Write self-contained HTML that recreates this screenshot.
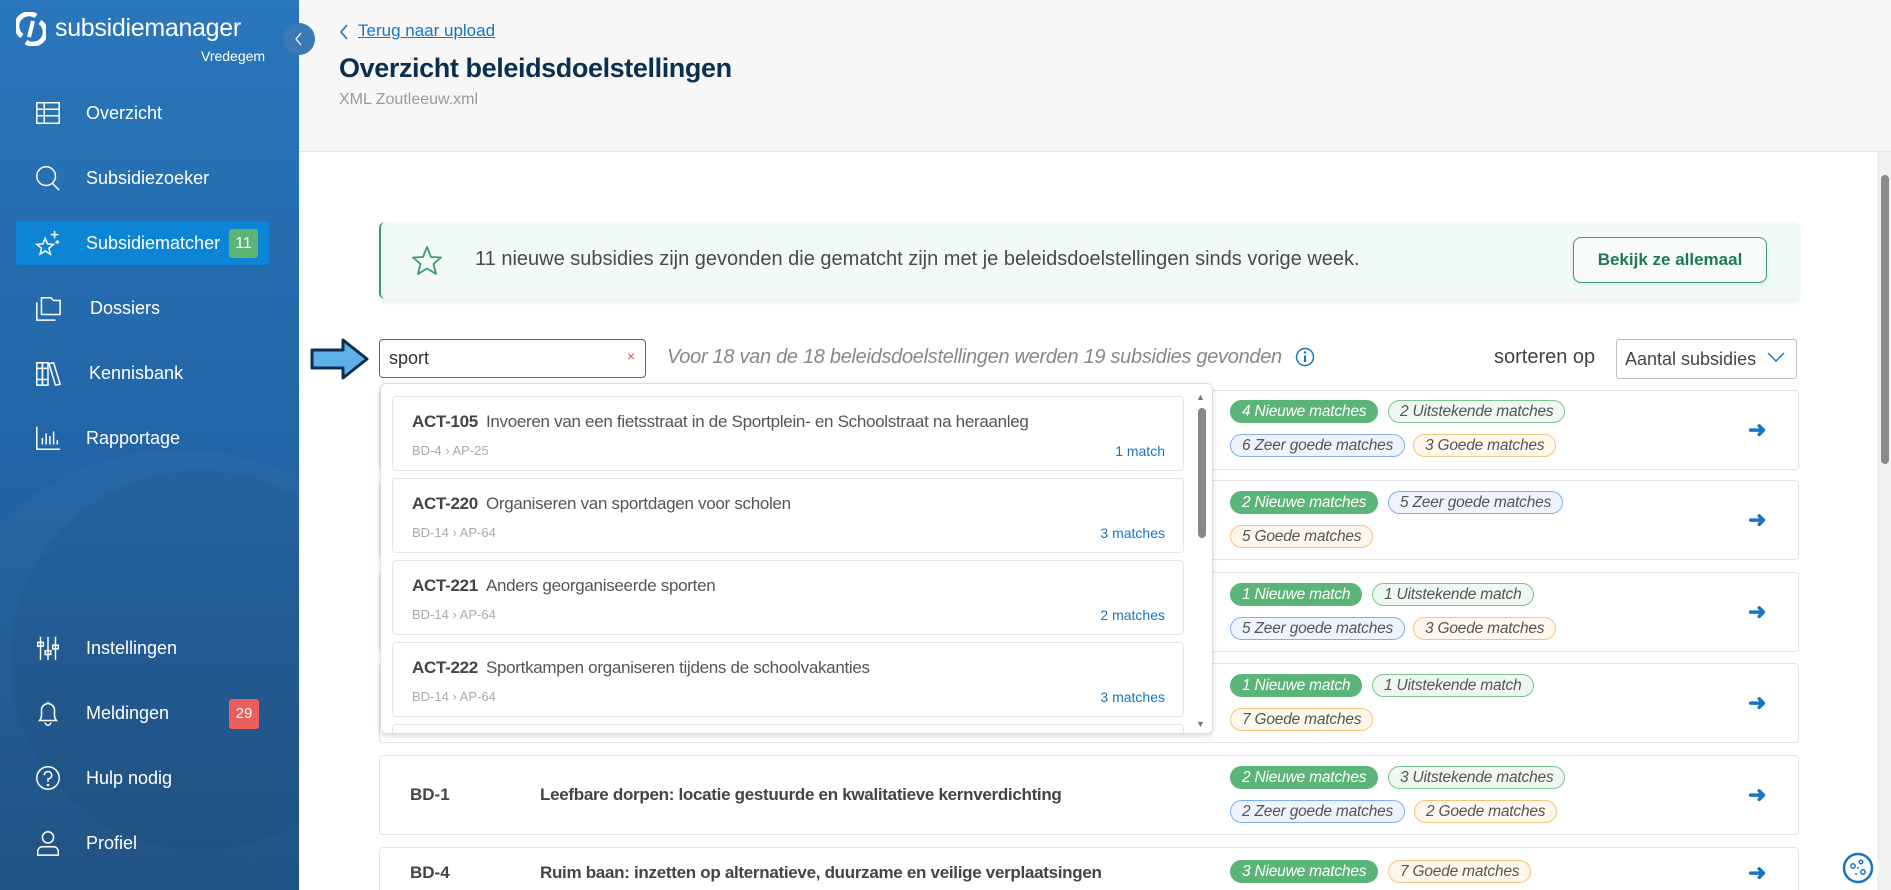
<!DOCTYPE html>
<html><head><meta charset="utf-8"><style>
*{box-sizing:border-box;margin:0;padding:0}
html,body{width:1891px;height:890px;overflow:hidden}
body{font-family:"Liberation Sans",sans-serif;background:#fff;position:relative;color:#333}
#wrap{position:absolute;left:0;top:0;width:1891px;height:890px;overflow:hidden}
.abs{position:absolute}
#side{left:0;top:0;width:299px;height:890px;background:linear-gradient(180deg,#2a77bb 0%,#2265a6 50%,#1c4f80 100%);overflow:hidden}
.nav{position:absolute;left:34px;color:#fff;font-size:18px;display:flex;align-items:center}
.nav svg{width:28px;height:28px;margin-right:24px;fill:none;stroke:#fff;stroke-width:1.6}
#hdr{left:299px;top:0;width:1592px;height:152px;background:#f7f7f7;border-bottom:1px solid #e6e6e6}
.row{position:absolute;left:379px;width:1420px;height:80px;border:1px solid #e3e3e3;border-radius:4px;background:#fff}
.b{position:absolute;height:23px;border-radius:12px;font-size:15.5px;font-style:italic;padding:0 11px;line-height:21px;border:1px solid;white-space:nowrap;letter-spacing:-.2px}
.g{background:#5bb478;border-color:#5bb478;color:#fff}
.u{background:#eef8f1;border-color:#7cc494;color:#555}
.z{background:#eef4ff;border-color:#83aef0;color:#555}
.o{background:#fff7ec;border-color:#f5c47c;color:#555}
.arr{position:absolute;left:1368px;top:26px;color:#1676c4;font-size:22px;font-weight:bold}
.item{position:absolute;left:11px;width:792px;height:75px;border:1px solid #e6e6e6;border-radius:4px;background:#fff}
.item .t{position:absolute;left:19px;top:15px;font-size:17px;color:#555;white-space:nowrap;letter-spacing:-.3px}
.item .t b{color:#444;margin-right:8px}
.item .s{position:absolute;left:19px;top:46px;font-size:13px;color:#aaa}
.item .m{position:absolute;right:18px;top:46px;font-size:14px;color:#1676c4}
</style></head><body><div id="wrap">
<div id="side" class="abs">
 <svg class="abs" style="left:-100px;top:430px" width="460" height="460" viewBox="0 0 460 460"><circle cx="280" cy="280" r="260" fill="rgba(255,255,255,0.025)"/><circle cx="300" cy="230" r="190" fill="rgba(0,0,0,0.03)"/></svg>
 <svg class="abs" style="left:16px;top:12px" width="30" height="34" viewBox="0 0 30 34"><path d="M20 4 A12 12 0 0 0 6 24 M10 30 A12 12 0 0 0 24 10" fill="none" stroke="#fff" stroke-width="5"/><path d="M17 9 L13 25" stroke="#fff" stroke-width="4"/></svg>
 <div class="abs" style="left:55px;top:14px;color:#fff;font-size:25px;letter-spacing:-.3px">subsidiemanager</div>
 <div class="abs" style="left:201px;top:48px;color:#fff;font-size:14px">Vredegem</div>
 <div class="nav" style="top:99px"><svg viewBox="0 0 30 30"><rect x="3" y="4" width="24" height="22"/><path d="M3 11H27M3 18H27M11 4V26"/></svg>Overzicht</div>
 <div class="nav" style="top:164px"><svg viewBox="0 0 30 30"><circle cx="13" cy="13" r="10"/><path d="M20 21L27 28"/></svg>Subsidiezoeker</div>
 <div class="abs" style="left:16px;top:221px;width:253px;height:44px;background:#0c85d6;border-radius:4px"></div>
 <div class="nav" style="top:229px"><svg viewBox="0 0 30 30"><path d="M12 10L14.5 16 21 16.5 16 20.5 17.5 27 12 23.5 6.5 27 8 20.5 3 16.5 9.5 16Z"/><path d="M22 2V10M18 6H26M25 12V16M23 14H27"/></svg>Subsidiematcher</div>
 <div class="abs" style="left:229px;top:229px;width:29px;height:29px;background:#5cb574;border-radius:3px;color:#fff;font-size:16px;text-align:center;line-height:29px">11</div>
 <div class="nav" style="top:294px"><svg viewBox="0 0 30 30"><path d="M8 4H18L21 7H28V22H8Z"/><path d="M3 9V28H23"/></svg><span style="margin-left:4px">Dossiers</span></div>
 <div class="nav" style="top:359px"><svg viewBox="0 0 30 30"><rect x="3" y="4" width="6" height="24"/><rect x="9" y="4" width="6" height="24"/><path d="M16 5L21 4 28 27 23 28Z"/><path d="M3 10H15M3 22H15"/></svg><span style="margin-left:3px">Kennisbank</span></div>
 <div class="nav" style="top:424px"><svg viewBox="0 0 30 30"><path d="M3 3V27H28M9 22V15M13 22V10M17 22V13M21 22V8M25 22V17"/></svg>Rapportage</div>
 <div class="nav" style="top:634px"><svg viewBox="0 0 30 30"><path d="M7 3V28M15 3V28M23 3V28"/><rect x="4" y="9" width="6" height="4"/><rect x="12" y="18" width="6" height="4"/><rect x="20" y="12" width="6" height="4"/></svg>Instellingen</div>
 <div class="nav" style="top:699px"><svg viewBox="0 0 30 30"><path d="M6 23C9 20 8 15 8 12A7 7 0 0 1 22 12C22 15 21 20 24 23Z M12 25A3 3 0 0 0 18 25M15 3V5"/></svg>Meldingen</div>
 <div class="abs" style="left:229px;top:699px;width:30px;height:30px;background:#ea5e5e;border-radius:3px;color:#fff;font-size:15px;text-align:center;line-height:30px">29</div>
 <div class="nav" style="top:764px"><svg viewBox="0 0 30 30"><circle cx="15" cy="15" r="12"/><path d="M11 12A4 4 0 1 1 15 16V19"/><circle cx="15" cy="22.5" r=".6"/></svg>Hulp nodig</div>
 <div class="nav" style="top:829px"><svg viewBox="0 0 30 30"><circle cx="15" cy="9" r="6"/><path d="M4 28V24A5 5 0 0 1 9 19H21A5 5 0 0 1 26 24V28Z"/></svg>Profiel</div>
</div>
<div id="hdr" class="abs"></div>
<div class="abs" style="left:283px;top:23px;width:32px;height:32px;border-radius:50%;background:#3a78b8"><svg width="32" height="32" viewBox="0 0 32 32"><path d="M18 10L13 16 18 22" fill="none" stroke="#fff" stroke-width="1.2"/></svg></div>
<svg class="abs" style="left:338px;top:22px" width="12" height="20" viewBox="0 0 12 20"><path d="M9 3L3 10 9 17" fill="none" stroke="#1676c4" stroke-width="1.6"/></svg>
<div class="abs" style="left:358px;top:21px;font-size:17px;color:#1676c4;text-decoration:underline">Terug naar upload</div>
<div class="abs" style="left:339px;top:53px;font-size:27px;font-weight:bold;color:#0d2f4f;letter-spacing:-.4px">Overzicht beleidsdoelstellingen</div>
<div class="abs" style="left:339px;top:91px;font-size:16px;color:#9a9a9a">XML Zoutleeuw.xml</div>
<div class="abs" style="left:1877px;top:152px;width:14px;height:738px;background:#f1f1f1"></div>
<div class="abs" style="left:1881px;top:175px;width:8px;height:289px;background:#8a8a8a;border-radius:4px"></div>
<div class="abs" style="left:379px;top:222px;width:1420px;height:77px;background:#f1faf6;border-left:2px solid #3f9a6b;border-radius:6px;box-shadow:0 3px 6px rgba(0,0,0,.08)"></div>
<svg class="abs" style="left:410px;top:244px" width="34" height="34" viewBox="0 0 34 34"><path d="M17 3L21 13 31 13.5 23.5 20 26 30 17 24.5 8 30 10.5 20 3 13.5 13 13Z" fill="none" stroke="#3f9a6b" stroke-width="1.8" stroke-linejoin="round"/></svg>
<div class="abs" style="left:475px;top:248px;font-size:20px;color:#4a4a4a">11 nieuwe subsidies zijn gevonden die gematcht zijn met je beleidsdoelstellingen sinds vorige week.</div>
<div class="abs" style="left:1573px;top:237px;width:194px;height:46px;border:1px solid #3f9a6b;border-radius:8px;background:#f7fcfa;color:#1f7a53;font-weight:bold;font-size:17px;text-align:center;line-height:44px;box-shadow:0 2px 4px rgba(0,0,0,.08)">Bekijk ze allemaal</div>
<svg class="abs" style="left:309px;top:337px" width="62" height="44" viewBox="0 0 62 44"><path d="M3 13H34V3L58 22 34 41V31H3Z" fill="#5fb0e8" stroke="#0d2f4f" stroke-width="3" stroke-linejoin="round"/></svg>
<div class="abs" style="left:379px;top:339px;width:267px;height:39px;border:1px solid #1676c4;border-radius:4px;background:#fff"></div>
<div class="abs" style="left:389px;top:348px;font-size:18px;color:#333">sport</div>
<div class="abs" style="left:627px;top:348px;font-size:14px;color:#e05555">×</div>
<div class="abs" style="left:667px;top:346px;font-size:20px;font-style:italic;color:#888;letter-spacing:-.3px">Voor 18 van de 18 beleidsdoelstellingen werden 19 subsidies gevonden</div>
<svg class="abs" style="left:1295px;top:347px" width="20" height="20" viewBox="0 0 20 20"><circle cx="10" cy="10" r="8.5" fill="none" stroke="#1676c4" stroke-width="1.5"/><path d="M10 8.5V15" stroke="#1676c4" stroke-width="2"/><circle cx="10" cy="5.5" r="1.2" fill="#1676c4"/></svg>
<div class="abs" style="left:1494px;top:346px;font-size:20px;color:#444">sorteren op</div>
<div class="abs" style="left:1616px;top:339px;width:181px;height:40px;border:1px solid #bbb;border-radius:3px;background:#fff"></div>
<div class="abs" style="left:1625px;top:349px;font-size:18px;color:#444">Aantal subsidies</div>
<svg class="abs" style="left:1766px;top:350px" width="20" height="14" viewBox="0 0 20 14"><path d="M2 3L10 11 18 3" fill="none" stroke="#1676c4" stroke-width="1.4"/></svg>
<div class="row" style="top:390px"><div class="b g" style="left:850px;top:9px">4 Nieuwe matches</div><div class="b u" style="left:1008px;top:9px">2 Uitstekende matches</div><div class="b z" style="left:850px;top:43px">6 Zeer goede matches</div><div class="b o" style="left:1033px;top:43px">3 Goede matches</div><div class="arr">➜</div></div>
<div class="row" style="top:480px"><div class="b g" style="left:850px;top:10px">2 Nieuwe matches</div><div class="b z" style="left:1008px;top:10px">5 Zeer goede matches</div><div class="b o" style="left:850px;top:44px">5 Goede matches</div><div class="arr">➜</div></div>
<div class="row" style="top:572px"><div class="b g" style="left:850px;top:10px">1 Nieuwe match</div><div class="b u" style="left:992px;top:10px">1 Uitstekende match</div><div class="b z" style="left:850px;top:44px">5 Zeer goede matches</div><div class="b o" style="left:1033px;top:44px">3 Goede matches</div><div class="arr">➜</div></div>
<div class="row" style="top:663px"><div class="b g" style="left:850px;top:10px">1 Nieuwe match</div><div class="b u" style="left:992px;top:10px">1 Uitstekende match</div><div class="b o" style="left:850px;top:44px">7 Goede matches</div><div class="arr">➜</div></div>
<div class="row" style="top:755px"><div class="abs" style="left:30px;top:29px;font-size:17px;font-weight:bold;color:#444">BD-1</div><div class="abs" style="left:160px;top:29px;font-size:17px;font-weight:bold;color:#444;letter-spacing:-.3px">Leefbare dorpen: locatie gestuurde en kwalitatieve kernverdichting</div><div class="b g" style="left:850px;top:10px">2 Nieuwe matches</div><div class="b u" style="left:1008px;top:10px">3 Uitstekende matches</div><div class="b z" style="left:850px;top:44px">2 Zeer goede matches</div><div class="b o" style="left:1034px;top:44px">2 Goede matches</div><div class="arr">➜</div></div>
<div class="row" style="top:847px;height:43px;border-bottom:none;border-radius:4px 4px 0 0"><div class="abs" style="left:30px;top:15px;font-size:17px;font-weight:bold;color:#444">BD-4</div><div class="abs" style="left:160px;top:15px;font-size:17px;font-weight:bold;color:#444;letter-spacing:-.3px">Ruim baan: inzetten op alternatieve, duurzame en veilige verplaatsingen</div><div class="b g" style="left:850px;top:12px">3 Nieuwe matches</div><div class="b o" style="left:1008px;top:12px">7 Goede matches</div><div class="arr" style="top:12px">➜</div></div>
<div class="abs" style="left:380px;top:383px;width:833px;height:351px;background:#fff;border:1px solid #ddd;border-radius:6px;box-shadow:0 2px 6px rgba(0,0,0,.15);overflow:hidden">
 <div class="item" style="top:12px"><div class="t"><b>ACT-105</b>Invoeren van een fietsstraat in de Sportplein- en Schoolstraat na heraanleg</div><div class="s">BD-4 › AP-25</div><div class="m">1 match</div></div>
 <div class="item" style="top:94px"><div class="t"><b>ACT-220</b>Organiseren van sportdagen voor scholen</div><div class="s">BD-14 › AP-64</div><div class="m">3 matches</div></div>
 <div class="item" style="top:176px"><div class="t"><b>ACT-221</b>Anders georganiseerde sporten</div><div class="s">BD-14 › AP-64</div><div class="m">2 matches</div></div>
 <div class="item" style="top:258px"><div class="t"><b>ACT-222</b>Sportkampen organiseren tijdens de schoolvakanties</div><div class="s">BD-14 › AP-64</div><div class="m">3 matches</div></div>
 <div class="item" style="top:340px"></div>
 <div class="abs" style="left:815px;top:8px;font-size:9px;color:#777">▲</div>
 <div class="abs" style="left:815px;top:335px;font-size:9px;color:#777">▼</div>
 <div class="abs" style="left:817px;top:24px;width:8px;height:130px;background:#888;border-radius:4px"></div>
</div>
<svg class="abs" style="left:1842px;top:852px" width="32" height="32" viewBox="0 0 32 32"><circle cx="16" cy="16" r="14" fill="#fff" stroke="#1676c4" stroke-width="2.5"/><circle cx="11" cy="14" r="2.2" fill="none" stroke="#1676c4" stroke-width="1.5"/><circle cx="19" cy="10" r="1.8" fill="none" stroke="#1676c4" stroke-width="1.5"/><circle cx="21" cy="20" r="2.2" fill="none" stroke="#1676c4" stroke-width="1.5"/><circle cx="14" cy="22" r="1" fill="#1676c4"/><circle cx="16" cy="16" r="1" fill="#1676c4"/></svg>
</div></body></html>
